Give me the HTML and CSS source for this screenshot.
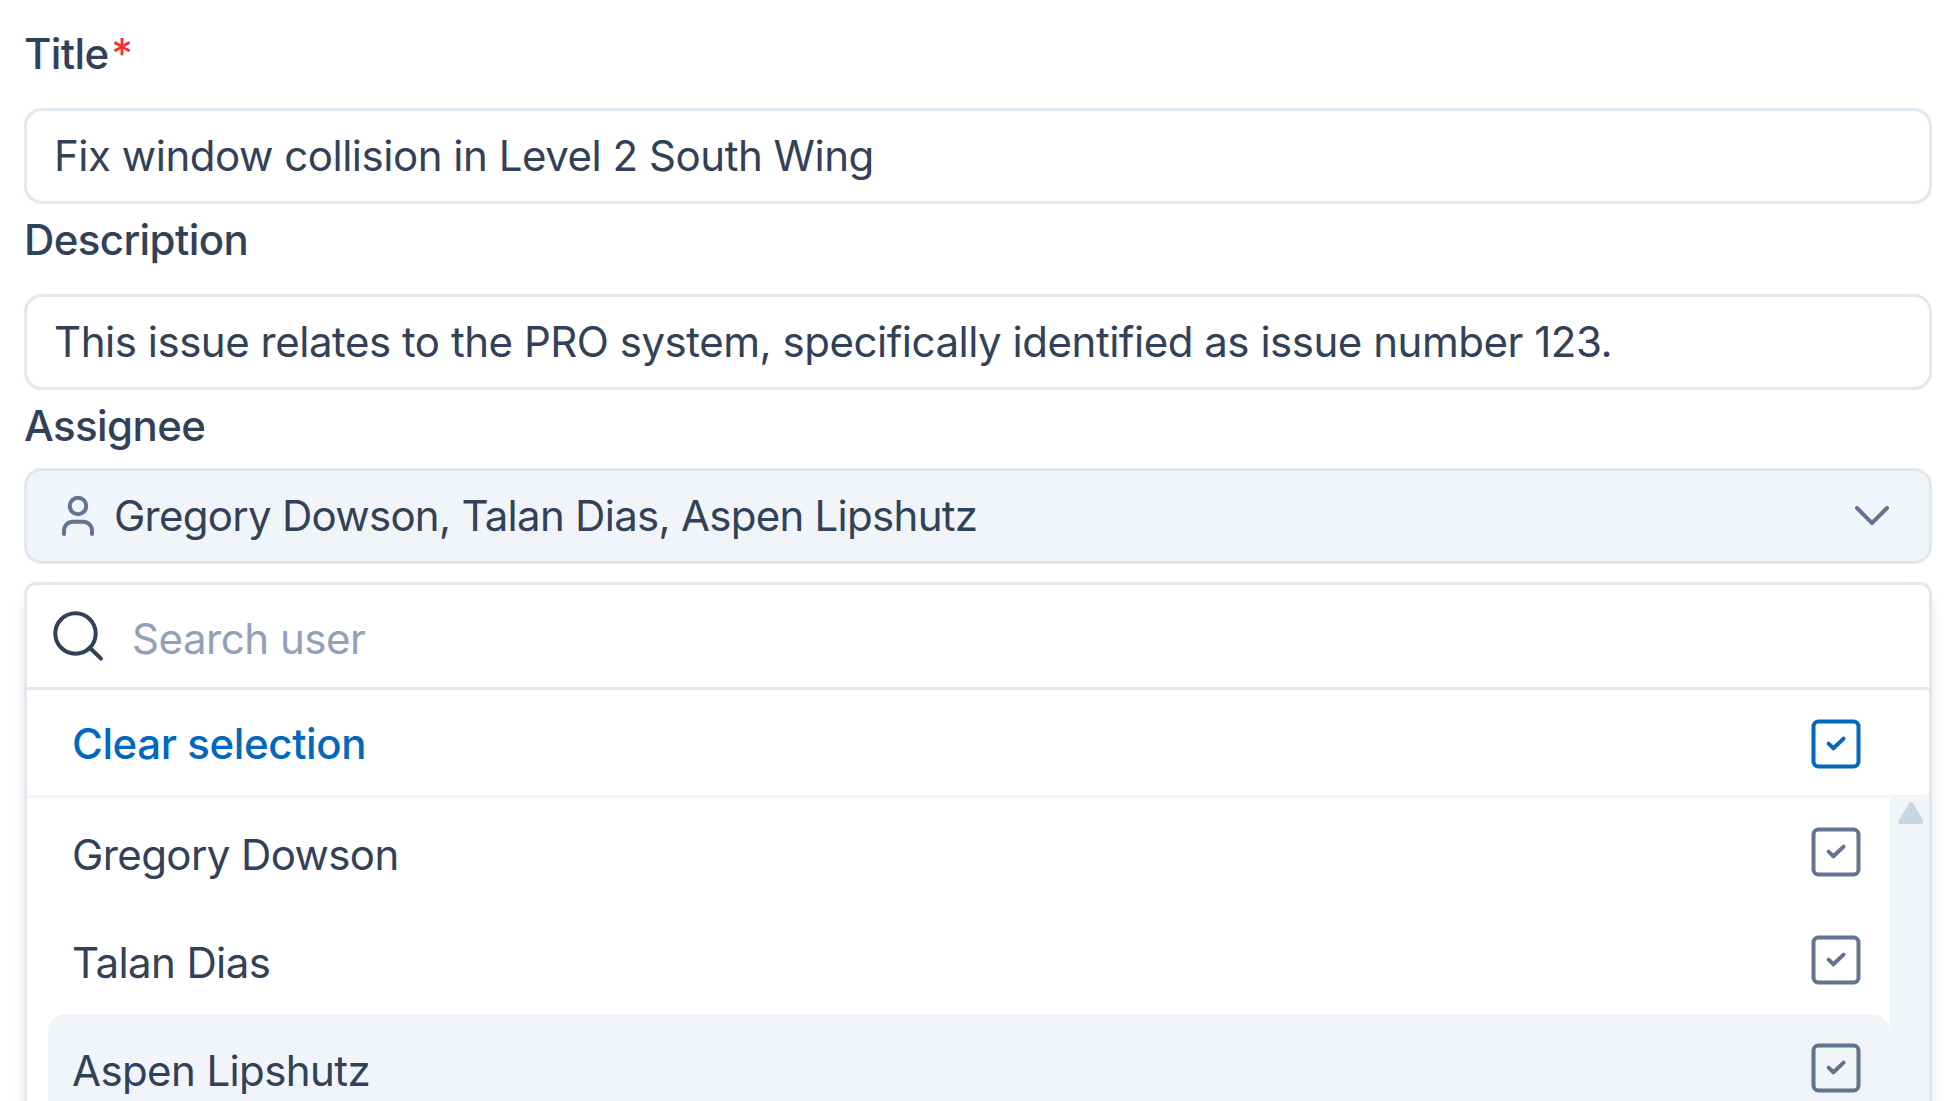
FILE: index.html
```html
<!DOCTYPE html>
<html lang="en">

<head>
    <meta charset="UTF-8">
    <meta name="viewport" content="width=device-width, initial-scale=1.0">
    <title>Edit Issue</title>
    <link rel="stylesheet" href="styles.css">
</head>

<body>
    <form class="issue-form">
        <div class="field">
            <label class="label" for="title">Title<span class="required">*</span></label>
            <input class="input" id="title" type="text" value="Fix window collision in Level 2 South Wing">
        </div>

        <div class="field">
            <label class="label" for="description">Description</label>
            <input class="input" id="description" type="text" value="This issue relates to the PRO system, specifically identified as issue number 123.">
        </div>

        <div class="field field-assignee">
            <span class="label">Assignee</span>
            <div class="select">
                <svg class="icon-user" viewBox="0 0 44 48">
                    <circle cx="22" cy="14" r="8.2" />
                    <path d="M8 42v-3.4a8.8 8.8 0 0 1 8.8-8.8h10.4a8.8 8.8 0 0 1 8.8 8.8V42" />
                </svg>
                <span class="select-value">Gregory Dowson, Talan Dias, Aspen Lipshutz</span>
                <svg class="icon-chevron" viewBox="0 0 36 20">
                    <path d="M3 2l15 15.2L33 2" />
                </svg>
            </div>
        </div>

        <div class="dropdown">
            <div class="search">
                <svg class="icon-search" viewBox="0 0 54 54">
                    <circle cx="24.5" cy="24.5" r="20.2" />
                    <path d="M39 39l11 10.6" />
                </svg>
                <input class="search-input" type="text" placeholder="Search user">
            </div>

            <div class="clear-row">
                <span class="clear-text">Clear selection</span>
                <svg class="checkbox" viewBox="0 0 54 54">
                    <rect x="4.5" y="4.5" width="45" height="45" rx="5" />
                    <path d="M19.6 26.6l4.8 4.7 10.2-9.7" />
                </svg>
            </div>

            <div class="list-wrap">
                <ul class="user-list">
                    <li class="user">
                        <span class="user-name">Gregory Dowson</span>
                        <svg class="checkbox" viewBox="0 0 54 54">
                            <rect x="4.5" y="4.5" width="45" height="45" rx="5" />
                            <path d="M19.6 26.6l4.8 4.7 10.2-9.7" />
                        </svg>
                    </li>
                    <li class="user">
                        <span class="user-name">Talan Dias</span>
                        <svg class="checkbox" viewBox="0 0 54 54">
                            <rect x="4.5" y="4.5" width="45" height="45" rx="5" />
                            <path d="M19.6 26.6l4.8 4.7 10.2-9.7" />
                        </svg>
                    </li>
                    <li class="user active">
                        <span class="user-name">Aspen Lipshutz</span>
                        <svg class="checkbox" viewBox="0 0 54 54">
                            <rect x="4.5" y="4.5" width="45" height="45" rx="5" />
                            <path d="M19.6 26.6l4.8 4.7 10.2-9.7" />
                        </svg>
                    </li>
                </ul>
                <div class="scrollbar">
                    <svg class="scroll-up" viewBox="0 0 39 39">
                        <path d="M21 6.5L11 23.5H31Z" />
                    </svg>
                </div>
            </div>
        </div>
    </form>
</body>

</html>
```
FILE: styles.css
```css
* {
    box-sizing: border-box;
}

body {
    margin: 0;
    height: 1101px;
    overflow: hidden;
    background-color: white;
    color: #314158;
    font-family: Inter, sans-serif;
    font-size: 42px;
    line-height: 54px;
    letter-spacing: -0.47px;
}

.issue-form {
    padding: 27px 24px 0;
}

.field {
    display: flex;
    flex-direction: column;
    gap: 27px;
    margin-bottom: 9px;
}

.field-assignee {
    gap: 15px;
    margin-bottom: 18px;
}

.label {
    font-weight: 500;
    letter-spacing: -0.6px;
}

.required {
    margin-left: 3px;
    color: #fb2c36;
    font-weight: 400;
}

.input {
    width: 100%;
    height: 96px;
    padding: 0 27px 2px;
    border: 3px solid #e2e8f0;
    border-radius: 18px;
    background-color: white;
    color: inherit;
    font: inherit;
    letter-spacing: inherit;
    outline: none;
}

.select {
    display: flex;
    align-items: center;
    height: 96px;
    padding: 0 39px 0 29px;
    border: 3px solid #e2e8f0;
    border-radius: 18px;
    background-color: #f1f5f9;
    cursor: pointer;
}

.select-value {
    flex: 1;
    margin-left: 14px;
    letter-spacing: -0.72px;
}

svg {
    display: block;
    flex-shrink: 0;
    fill: none;
    stroke: #62748e;
    stroke-width: 4;
    stroke-linecap: round;
    stroke-linejoin: round;
}

.icon-user {
    width: 44px;
    height: 48px;
}

.icon-chevron {
    width: 36px;
    height: 20px;
}

.icon-search {
    width: 54px;
    height: 54px;
    stroke: #314158;
}

.dropdown {
    height: 600px;
    border: 3px solid #e2e8f0;
    border-radius: 12px;
    background-color: white;
    box-shadow: 0 12px 18px -3px rgba(0, 0, 0, 0.1), 0 6px 12px -6px rgba(0, 0, 0, 0.1);
}

.search {
    display: flex;
    align-items: center;
    height: 105px;
    padding: 0 24px;
    border-bottom: 3px solid #e2e8f0;
}

.search-input {
    flex: 1;
    height: 60px;
    margin: 4px 0 0 27px;
    padding: 0;
    border: none;
    background: transparent;
    color: inherit;
    font: inherit;
    letter-spacing: inherit;
    outline: none;
}

.search-input::placeholder {
    color: #90a1b9;
    opacity: 1;
}

.clear-row {
    display: flex;
    justify-content: space-between;
    align-items: center;
    height: 108px;
    padding: 3px 66px 0 45px;
    border-bottom: 3px solid #f1f5f9;
    color: #0069bd;
    font-weight: 500;
    letter-spacing: -0.4px;
}

.clear-row .checkbox {
    stroke: #0069bd;
}

.checkbox {
    width: 54px;
    height: 54px;
}

.list-wrap {
    display: flex;
    height: 384px;
    overflow: hidden;
}

.user-list {
    flex: 1;
    margin: 0;
    padding: 0 0 0 21px;
    list-style: none;
}

.user {
    display: flex;
    justify-content: space-between;
    align-items: center;
    height: 108px;
    padding: 0 27px 0 24px;
    border-radius: 18px;
}

.user.active {
    background-color: #f1f5f9;
}

.user-name {
    padding-top: 6px;
    letter-spacing: -0.6px;
}

.scrollbar {
    width: 39px;
    background-color: #f1f5f9;
}

.scroll-up {
    width: 39px;
    height: 39px;
    fill: #cad5e2;
    stroke: #cad5e2;
    stroke-width: 5;
}
```
